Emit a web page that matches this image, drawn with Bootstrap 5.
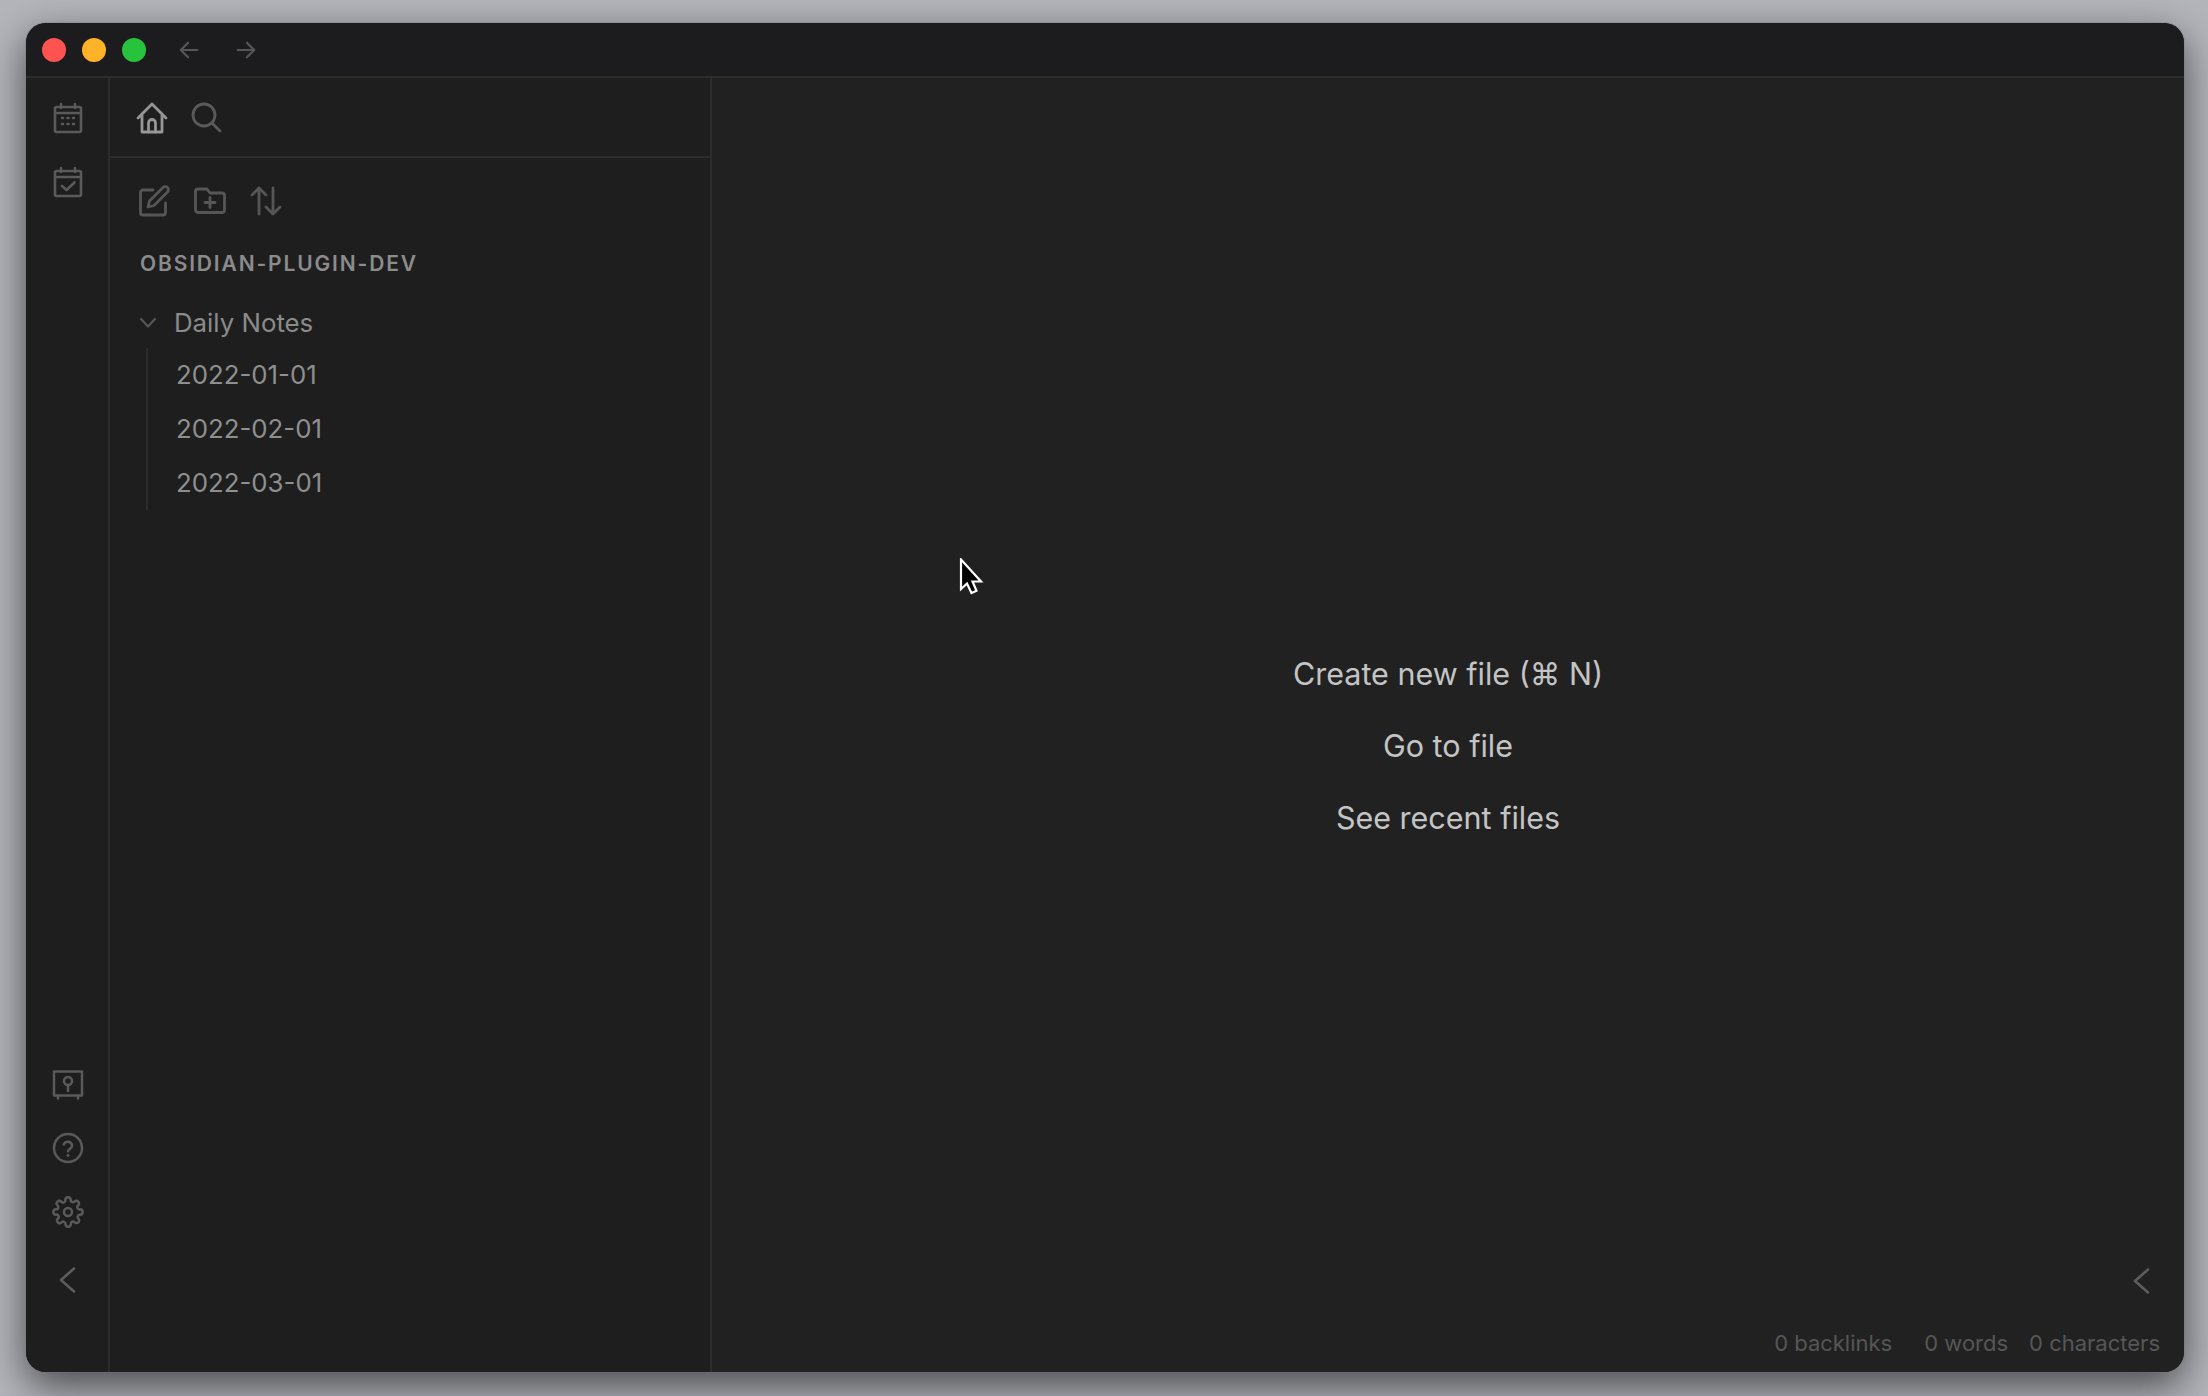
<!DOCTYPE html>
<html lang="en">
<head>
<meta charset="UTF-8">
<title>Obsidian</title>
<link href="https://cdn.jsdelivr.net/npm/bootstrap@5.3.3/dist/css/bootstrap.min.css" rel="stylesheet">
<style>
html, body { height: 100%; }
body {
    background: #b4b5bb;
    padding: 23px 24px 24px 26px;
    font-family: Inter, "Liberation Sans", "DejaVu Sans", sans-serif;
    overflow: hidden;
}
.app-window {
    height: 1349px;
    background: #1e1e1e;
    border-radius: 20px;
    overflow: hidden;
    position: relative;
    box-shadow: 0 0 0 1px rgba(120,120,125,.35), 0 14px 40px rgba(0,0,0,.6);
}
.title-bar { height: 55px; background: #1c1c1e; border-bottom: 2px solid #2c2c2c; padding: 1px 0 0 16px; flex: none; }
.light { width: 24px; height: 24px; border-radius: 50%; margin-right: 16px; }
.light-red { background: #fe5350; }
.light-yellow { background: #fdb328; }
.light-green { background: #28c33d; }
.nav-arrow { width: 22px; height: 22px; color: #565656; }
.nav-gap { margin-right: 19px; }
.rail { width: 84px; background: #1e1e1e; border-right: 2px solid #2c2c2c; flex: none; padding: 24px 0 77px 2px; }
.rail-icon { width: 32px; height: 32px; color: #5a5a5a; }
.rail-top { gap: 32px; }
.rail-bottom { gap: 32px; }
.rail-fold { width: 30px; height: 30px; color: #5c5c5c; margin-top: 5px; }
.side-pane { width: 602px; background: #1e1e1e; border-right: 2px solid #2c2c2c; flex: none; }
.tab-head { height: 80px; border-bottom: 2px solid #2c2c2c; padding: 1px 0 0 26px; gap: 22px; flex: none; }
.tab-icon { width: 32px; height: 32px; color: #5a5a5a; }
.tab-icon.is-active { color: #969696; }
.tool-row { padding: 27px 0 0 28px; gap: 24px; }
.tool-icon { width: 32px; height: 32px; color: #565656; }
.vault-name { margin: 35px 0 0 30px; font-size: 21px; line-height: 24px; font-weight: 600; letter-spacing: 1.85px; color: #8b8b8b; }
.folder-row { margin: 33px 0 0 29px; height: 28px; color: #8b8b8b; font-size: 25.800px; line-height: 28px; }
.folder-arrow { width: 18px; height: 18px; color: #565656; margin-right: 17px; }
.file-list { margin: 11px 0 0 36px; padding: 0 0 0 28px; border-left: 2px solid #2c2c2c; list-style: none; }
.file-list li { height: 54px; line-height: 54px; font-size: 25.800px; color: #8f8f8f; }
.main-pane { background: #212121; min-width: 0; }
.empty-state { padding-top: 582px; gap: 44px; color: #c4c4c4; font-size: 30.500px; line-height: 28px; }
.pane-fold { width: 30px; height: 30px; color: #5c5c5c; margin: 0 27px 0 0; }
.status-bar { color: #565656; font-size: 22px; line-height: 28px; padding: 33px 24px 15px 0; }
.status-bar span + span { margin-left: 32px; }
.status-bar span.tight { margin-left: 21px; }
.mouse-arrow { position: absolute; left: 933px; top: 535px; width: 26px; height: 38px; }
</style>
</head>
<body>

<div class="app-window d-flex flex-column">
    <div class="title-bar d-flex align-items-center">
        <span class="light light-red"></span>
        <span class="light light-yellow"></span>
        <span class="light light-green"></span>
        <svg class="nav-arrow ms-3 nav-gap" viewBox="0 0 24 24" fill="none" stroke="currentColor" stroke-width="2.4" stroke-linecap="round" stroke-linejoin="round"><path d="M21 12H3M11 4l-8 8 8 8"/></svg>
        <svg class="nav-arrow ms-3" viewBox="0 0 24 24" fill="none" stroke="currentColor" stroke-width="2.4" stroke-linecap="round" stroke-linejoin="round"><path d="M3 12h18M13 4l8 8-8 8"/></svg>
    </div>

    <div class="d-flex flex-grow-1" style="min-height:0">
        <div class="rail d-flex flex-column align-items-center justify-content-between">
            <div class="rail-top d-flex flex-column align-items-center">
                <svg class="rail-icon" viewBox="0 0 32 32" fill="none" stroke="currentColor" stroke-width="2.6" stroke-linecap="round" stroke-linejoin="round"><rect x="3" y="5" width="26" height="25" rx="1.5"/><path d="M9 2v4M23 2v4M3 11h26"/><path d="M10 16h1M15.5 16h1M21 16h1M10 22h1M15.5 22h1M21 22h1" stroke-width="2.6"/></svg>
                <svg class="rail-icon" viewBox="0 0 32 32" fill="none" stroke="currentColor" stroke-width="2.6" stroke-linecap="round" stroke-linejoin="round"><rect x="3" y="5" width="26" height="25" rx="1.5"/><path d="M9 2v4M23 2v4M3 11h26M10 20l4.500 4 8-7.500"/></svg>
            </div>
            <div class="rail-bottom d-flex flex-column align-items-center">
                <svg class="rail-icon" viewBox="0 0 32 32" fill="none" stroke="currentColor" stroke-width="2.5" stroke-linecap="round" stroke-linejoin="round"><rect x="2" y="3.500" width="28" height="24"/><circle cx="16" cy="13" r="4"/><path d="M16 17v6M6 27.500v3M26 27.500v3"/></svg>
                <svg class="rail-icon" viewBox="0 0 32 32" fill="none" stroke="currentColor" stroke-width="2.5" stroke-linecap="round" stroke-linejoin="round"><circle cx="16" cy="16" r="14"/><path d="M11.800 12.500a4.300 4.300 0 0 1 8.300 1.300c0 2.900-4.100 3.300-4.100 5.400"/><path d="M16 23.500h.01" stroke-width="2.800"/></svg>
                <svg class="rail-icon" viewBox="0 0 24 24" fill="none" stroke="currentColor" stroke-width="1.850" stroke-linecap="round" stroke-linejoin="round"><circle cx="12" cy="12" r="3"/><path d="M19.400 15a1.650 1.650 0 0 0 .33 1.820l.06.06a2 2 0 1 1-2.830 2.830l-.06-.06a1.650 1.650 0 0 0-2.800 1.170V21a2 2 0 1 1-4 0v-.09a1.650 1.650 0 0 0-2.880-1.120l-.06.06a2 2 0 1 1-2.830-2.830l.06-.06A1.650 1.650 0 0 0 3.090 14H3a2 2 0 1 1 0-4h.09a1.650 1.650 0 0 0 1.120-2.880l-.06-.06a2 2 0 1 1 2.830-2.830l.06.06A1.650 1.650 0 0 0 10 3.090V3a2 2 0 1 1 4 0v.09a1.650 1.650 0 0 0 2.800 1.120l.06-.06a2 2 0 1 1 2.830 2.830l-.06.06A1.650 1.650 0 0 0 20.910 10H21a2 2 0 1 1 0 4h-.09a1.650 1.650 0 0 0-1.510 1z"/></svg>
                <svg class="rail-fold" viewBox="0 0 30 30" fill="none" stroke="currentColor" stroke-width="2.600" stroke-linecap="round" stroke-linejoin="round"><path d="M21 3.500L8 15l13 11.500"/></svg>
            </div>
        </div>

        <div class="side-pane d-flex flex-column">
            <div class="tab-head d-flex align-items-center">
                <svg class="tab-icon is-active" viewBox="0 0 32 32" fill="none" stroke="currentColor" stroke-width="2.800" stroke-linecap="round" stroke-linejoin="round"><path d="M2 16L16 2l14 14M6 13v17h20V13"/><path d="M12.500 30v-9a3.500 3.500 0 0 1 7 0v9"/></svg>
                <svg class="tab-icon" viewBox="0 0 32 32" fill="none" stroke="currentColor" stroke-width="2.800" stroke-linecap="round" stroke-linejoin="round"><circle cx="14" cy="13" r="11"/><path d="M22.500 21.500L30 29"/></svg>
            </div>
            <div class="tool-row d-flex">
                <svg class="tool-icon" viewBox="0 0 32 32" fill="none" stroke="currentColor" stroke-width="2.800" stroke-linecap="round" stroke-linejoin="round"><path d="M15 5H5a2.500 2.500 0 0 0-2.500 2.500v20A2.500 2.500 0 0 0 5 30h20a2.500 2.500 0 0 0 2.500-2.500V18"/><path d="M25 2.500a3 3 0 0 1 4.500 4.500L16 20.500l-6 1.500 1.500-6z"/></svg>
                <svg class="tool-icon" viewBox="0 0 32 32" fill="none" stroke="currentColor" stroke-width="2.800" stroke-linecap="round" stroke-linejoin="round"><path d="M4 4h9l3 4h12a2.500 2.500 0 0 1 2.500 2.500V25a2.500 2.500 0 0 1-2.500 2.500H4A2.500 2.500 0 0 1 1.500 25V6.500A2.500 2.500 0 0 1 4 4z"/><path d="M16 12.500v10M11 17.500h10"/></svg>
                <svg class="tool-icon" viewBox="0 0 32 32" fill="none" stroke="currentColor" stroke-width="2.800" stroke-linecap="round" stroke-linejoin="round"><path d="M9 29V3M2 10l7-7 7 7M23 3v26M16 22l7 7 7-7"/></svg>
            </div>
            <div class="vault-name">OBSIDIAN-PLUGIN-DEV</div>
            <div class="folder-row d-flex align-items-center">
                <svg class="folder-arrow" viewBox="0 0 18 18" fill="none" stroke="currentColor" stroke-width="2.200" stroke-linecap="round" stroke-linejoin="round"><path d="M2 5l7 7.500L16 5"/></svg>
                <span>Daily Notes</span>
            </div>
            <ul class="file-list">
                <li>2022-01-01</li>
                <li>2022-02-01</li>
                <li>2022-03-01</li>
            </ul>
        </div>

        <div class="main-pane flex-grow-1 d-flex flex-column">
            <div class="empty-state flex-grow-1 d-flex flex-column align-items-center">
                <div>Create new file (⌘ N)</div>
                <div>Go to file</div>
                <div>See recent files</div>
            </div>
            <div class="d-flex justify-content-end">
                <svg class="pane-fold" viewBox="0 0 30 30" fill="none" stroke="currentColor" stroke-width="2.600" stroke-linecap="round" stroke-linejoin="round"><path d="M21 3.500L8 15l13 11.500"/></svg>
            </div>
            <div class="status-bar d-flex justify-content-end">
                <span>0 backlinks</span>
                <span>0 words</span>
                <span class="tight">0 characters</span>
            </div>
        </div>
    </div>

    <svg class="mouse-arrow" viewBox="0 0 26 38"><path d="M2 1.500V31l6-5.500 4.500 9.500 5-2.200-4-9.300h8.500z" fill="#000" stroke="#fff" stroke-width="2.200" stroke-linejoin="miter"/></svg>
</div>

<script src="https://cdn.jsdelivr.net/npm/bootstrap@5.3.3/dist/js/bootstrap.bundle.min.js"></script>
</body>
</html>
